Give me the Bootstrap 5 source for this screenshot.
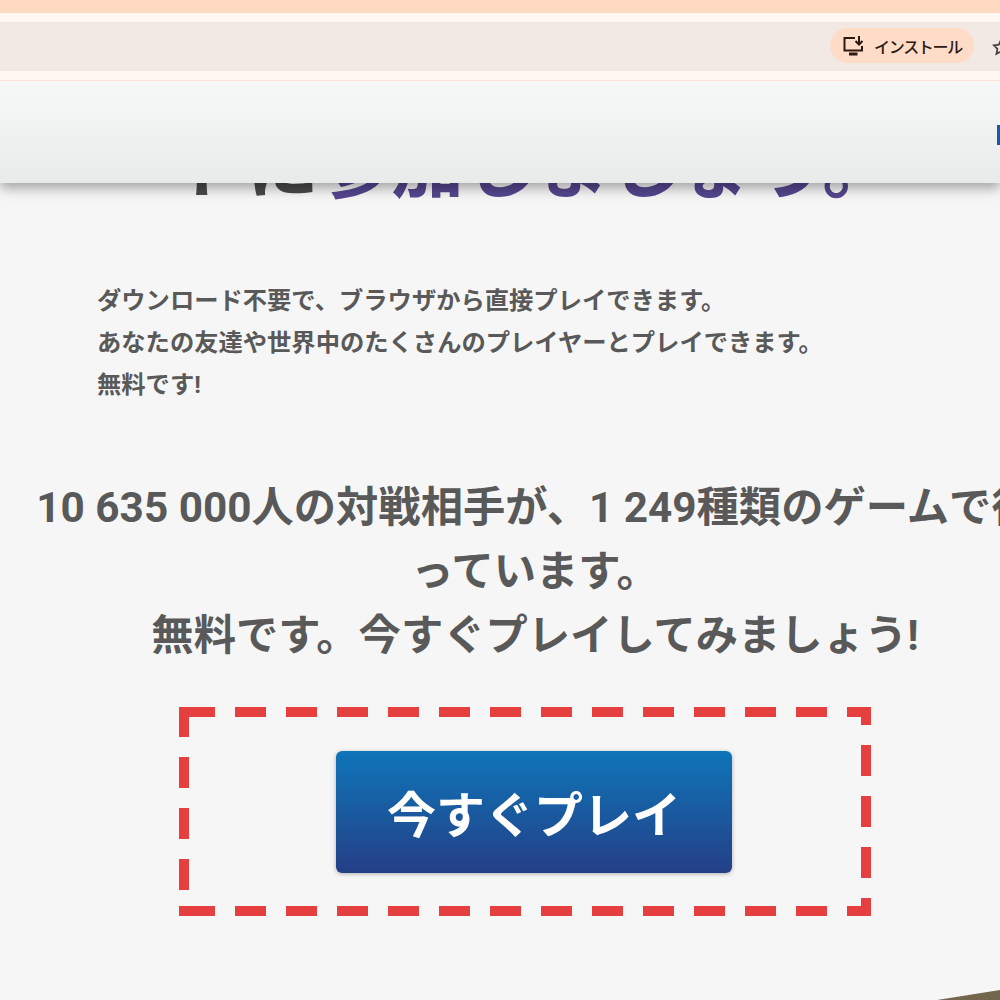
<!DOCTYPE html>
<html lang="ja">
<head>
  <meta charset="UTF-8">
  <meta name="viewport" content="width=device-width, initial-scale=1">
  <title>今すぐプレイ</title>
  <link href="https://cdn.jsdelivr.net/npm/bootstrap@5.3.0/dist/css/bootstrap.min.css" rel="stylesheet">
  <style>
    html, body {
      height: 1000px;
      overflow: hidden;
    }
    body {
      background-color: #f6f6f6;
      color: #595959;
      font-family: Roboto, "Noto Sans CJK JP", sans-serif;
    }
    .chrome-top {
      height: 13px;
      background-color: #ffd9c2;
    }
    .chrome-strip {
      height: 9px;
      background-color: #fff7f2;
    }
    .chrome-tabbar {
      height: 49px;
      background-color: #f2e8e4;
    }
    .install-pill {
      height: 35px;
      width: 144px;
      margin-left: 830px;
      flex-shrink: 0;
      border-radius: 18px;
      background-color: #ffdcc8;
      color: #2b1a12;
      font-size: 16px;
      font-weight: 500;
      font-family: "Noto Sans CJK JP", sans-serif;
      letter-spacing: -1.300px;
      transform: translateY(-1px);
    }
    .star-icon {
      margin-left: 18px;
      flex-shrink: 0;
    }
    .chrome-bottom {
      position: relative;
      z-index: 3;
      height: 10px;
      background-color: #fff7f2;
      border-bottom: 1px solid #fde3d5;
    }
    .site-header {
      position: relative;
      z-index: 2;
      height: 102px;
      background: linear-gradient(#f7f8f8, #e9eaea);
      box-shadow: 0 5px 12px rgba(0, 0, 0, .35);
    }
    .header-mark {
      width: 3px;
      height: 20px;
      background-color: #1c5aa0;
      top: 44px;
      right: 0;
    }
    .hero-title {
      margin: -55px 0 0;
      padding-left: 174px;
      font-size: 72.500px;
      line-height: 80px;
      font-weight: 700;
      color: #4a4a4a;
      white-space: nowrap;
    }
    .hero-title span {
      color: #54478f;
    }
    .intro-text {
      margin: 72px 0 0 97px;
      font-size: 24.300px;
      line-height: 42px;
      font-weight: 700;
    }
    .count-text {
      width: 1020px;
      margin: 70px 0 0 25px;
      font-size: 42.300px;
      line-height: 64px;
      font-weight: 700;
      text-align: center;
    }
    .play-zone {
      position: relative;
      width: 692px;
      height: 209px;
      margin: 39px 0 0 179px;
      padding: 44px 0 0 157px;
    }
    .dash-frame {
      position: absolute;
      top: 0;
      left: 0;
    }
    .play-btn {
      width: 396px;
      height: 122px;
      padding: 10px 0 0;
      border: 0;
      border-radius: 6px;
      background: linear-gradient(#0f75b9, #243f86);
      color: #fff;
      font-size: 49px;
      font-weight: 700;
      box-shadow: 0 1px 4px rgba(0, 0, 0, .3);
    }
    .corner-wedge {
      position: absolute;
      right: 0;
      bottom: 0;
    }
  </style>
</head>

<body>
  <div class="chrome-top"></div>
  <div class="chrome-strip"></div>
  <div class="chrome-tabbar d-flex align-items-center overflow-hidden">
    <div class="install-pill d-flex align-items-center justify-content-center gap-2">
      <svg width="24" height="22" viewBox="0 0 24 22" fill="none" stroke="#2b1a12" stroke-width="2">
        <path d="M13 3H2.500v12.500H20V11"/>
        <path d="M17 1v8M13.500 6l3.500 3.500L20.500 6"/>
        <path d="M7 19h8.500" stroke-width="3"/>
      </svg>
      <span>インストール</span>
    </div>
    <svg class="star-icon" width="18" height="18" viewBox="0 0 18 18" fill="none" stroke="#444" stroke-width="1.800">
      <path d="M9 2l2.200 4.600 5 .7-3.600 3.500.9 5L9 13.400 4.500 15.800l.9-5L1.800 7.300l5-.7z"/>
    </svg>
  </div>
  <div class="chrome-bottom"></div>

  <header class="site-header">
    <div class="header-mark position-absolute"></div>
  </header>

  <main>
    <h1 class="hero-title">トに<span>参加しましょう。</span></h1>
    <p class="intro-text">
      ダウンロード不要で、ブラウザから直接プレイできます。<br>
      あなたの友達や世界中のたくさんのプレイヤーとプレイできます。<br>
      無料です!
    </p>
    <p class="count-text mb-0">
      10 635 000人の対戦相手が、1 249種類のゲームで待っています。<br>
      無料です。今すぐプレイしてみましょう!
    </p>
    <div class="play-zone">
      <svg class="dash-frame" width="692" height="209" viewBox="0 0 692 209" fill="none" stroke="#e5403f" stroke-width="10">
        <path d="M0 5H692" stroke-dasharray="36 20 31 20 31 20 31 20 31 20 31 20 31 20 31 20 31 20 31 20 31 20 31 20 31 20"/>
        <path d="M0 204H692" stroke-dasharray="36 20 31 20 31 20 31 20 31 20 31 20 31 20 31 20 31 20 31 20 31 20 31 20 31 20"/>
        <path d="M5 0V30M5 50V81M5 101V132M5 152V183M5 199V209"/>
        <path d="M687 0V18M687 38V69M687 89V120M687 140V171M687 191V209"/>
      </svg>
      <button type="button" class="btn play-btn d-block">今すぐプレイ</button>
    </div>
  </main>

  <svg class="corner-wedge" width="63" height="10" viewBox="0 0 63 10">
    <path d="M0 10L63 0V10z" fill="#74654f"/>
  </svg>

  <script src="https://cdn.jsdelivr.net/npm/bootstrap@5.3.0/dist/js/bootstrap.bundle.min.js"></script>
</body>
</html>
